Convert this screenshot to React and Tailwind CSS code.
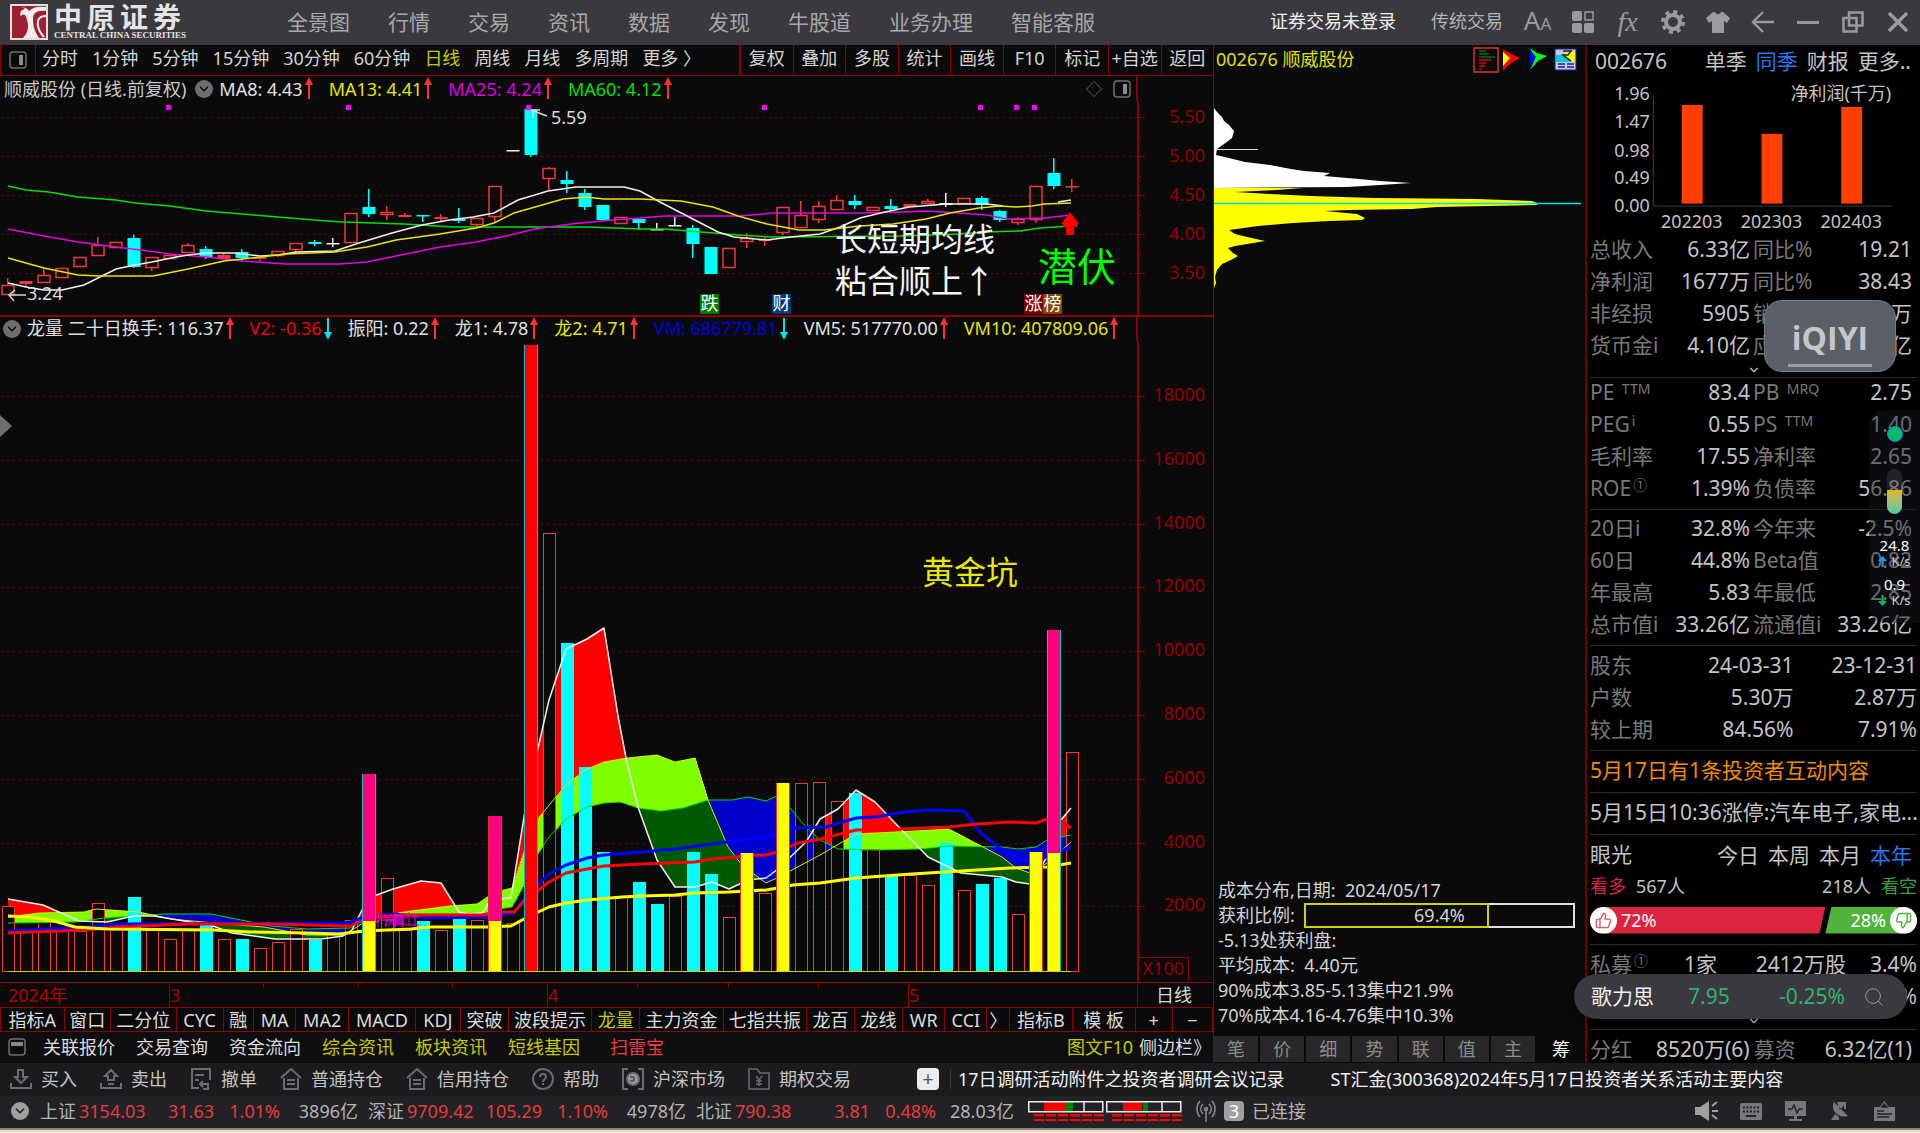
import { ChevronDown, Search, ThumbsDown, ThumbsUp } from 'lucide-react';

const MENU = ['全景图', '行情', '交易', '资讯', '数据', '发现', '牛股道', '业务办理', '智能客服'];
const PERIODS = ['分时', '1分钟', '5分钟', '15分钟', '30分钟', '60分钟', '日线', '周线', '月线', '多周期', '更多 〉'];
const TOOLS = ['复权', '叠加', '多股', '统计', '画线', 'F10', '标记', '+自选', '返回'];
const SIDE_TABS = ['笔', '价', '细', '势', '联', '值', '主'];

// label and relative width of every tab in the indicator bar
const INDICATORS = [
  ['指标A', 64], ['窗口', 46], ['二分位', 66], ['CYC', 47], ['融', 30], ['MA', 42], ['MA2', 53], ['MACD', 67],
  ['KDJ', 45], ['突破', 48], ['波段提示', 84], ['龙量', 48], ['主力资金', 84], ['七指共振', 84], ['龙百', 48],
  ['龙线', 48], ['WR', 42], ['CCI', 42], ['〉', 22], ['指标B', 63], ['模 板', 63], ['+', 37], ['−', 40],
];

const MA_LABELS = [
  { text: 'MA8: 4.43', cls: 'text-[#e0e0e0]', dir: 'up' },
  { text: 'MA13: 4.41', cls: 'text-[#e6e600]', dir: 'up' },
  { text: 'MA25: 4.24', cls: 'text-[#e000e0]', dir: 'up' },
  { text: 'MA60: 4.12', cls: 'text-[#00e000]', dir: 'up' },
];

const VOL_LABELS = [
  { text: '龙量 二十日换手: 116.37', cls: 'text-[#e0e0e0]', dir: 'up' },
  { text: 'V2: -0.36', cls: 'text-[#f00000]', dir: 'down' },
  { text: '振阳: 0.22', cls: 'text-[#e0e0e0]', dir: 'up' },
  { text: '龙1: 4.78', cls: 'text-[#e0e0e0]', dir: 'up' },
  { text: '龙2: 4.71', cls: 'text-[#e6e600]', dir: 'up' },
  { text: 'VM: 686779.81', cls: 'text-[#0000e0]', dir: 'down' },
  { text: 'VM5: 517770.00', cls: 'text-[#e0e0e0]', dir: 'up' },
  { text: 'VM10: 407809.06', cls: 'text-[#e6e600]', dir: 'up' },
];

// kind, body top, body bottom, high, low
// r = hollow red, c = cyan, f = flat red, w = white cross
const CANDLES = [
  ['r', 285, 295, 278, 295], ['f', 281, 284, 281, 287], ['r', 275, 283, 268, 283], ['r', 268, 278, 268, 278],
  ['r', 257, 267, 257, 267], ['r', 245, 256, 237, 256], ['r', 242, 248, 242, 248], ['c', 238, 267, 235, 268],
  ['r', 257, 268, 257, 271], ['r', 255, 259, 255, 259], ['r', 245, 253, 243, 253], ['c', 249, 257, 246, 259],
  ['f', 255, 259, 253, 259], ['c', 252, 258, 249, 261], ['f', 257, 259, 257, 261], ['r', 251, 256, 251, 257],
  ['r', 243, 250, 243, 252], ['c', 242, 244, 240, 246], ['w', 243, 244, 238, 247], ['r', 213, 243, 213, 243],
  ['c', 207, 214, 189, 217], ['r', 212, 215, 206, 220], ['f', 215, 217, 213, 217], ['c', 215, 216, 215, 222],
  ['f', 217, 219, 214, 222], ['c', 219, 221, 208, 223], ['r', 218, 225, 218, 227], ['r', 186, 217, 186, 222],
  ['w', 150, 151, 150, 151], ['c', 109, 155, 109, 157], ['r', 168, 179, 167, 190], ['c', 180, 184, 171, 193],
  ['c', 193, 207, 189, 210], ['c', 205, 220, 205, 220], ['r', 217, 224, 217, 224], ['c', 219, 223, 219, 230],
  ['w', 229, 230, 223, 230], ['w', 225, 226, 217, 226], ['c', 228, 244, 225, 258], ['c', 247, 274, 247, 274],
  ['r', 248, 268, 248, 268], ['r', 238, 242, 233, 248], ['f', 239, 241, 237, 246], ['r', 207, 233, 207, 235],
  ['r', 215, 228, 201, 228], ['r', 206, 220, 201, 223], ['r', 200, 210, 195, 210], ['c', 201, 205, 195, 209],
  ['r', 207, 211, 207, 211], ['c', 206, 209, 199, 211], ['f', 204, 207, 204, 207], ['r', 201, 204, 199, 204],
  ['w', 203, 205, 193, 207], ['r', 198, 204, 198, 204], ['c', 198, 205, 196, 210], ['c', 211, 220, 210, 222],
  ['r', 219, 223, 217, 225], ['r', 186, 220, 186, 223], ['c', 173, 186, 158, 189], ['f', 186, 187, 179, 192],
];

// kind and top of each volume bar
// p = pink over yellow, y = yellow, x = full red
const VOLUMES = [
  ['r', 906], ['r', 931], ['r', 922], ['r', 931], ['r', 931], ['r', 903], ['r', 925], ['c', 897], ['r', 928], ['r', 939],
  ['r', 929], ['c', 924], ['r', 939], ['c', 939], ['r', 948], ['r', 942], ['r', 929], ['c', 940], ['r', 933], ['r', 920],
  ['p', 774, 921], ['r', 878], ['r', 930], ['c', 921], ['r', 930], ['c', 919], ['r', 920], ['p', 816, 921], ['r', 923],
  ['x', 345], ['r', 533], ['c', 643], ['c', 767], ['c', 852], ['r', 896], ['c', 882], ['c', 904], ['r', 896], ['c', 852],
  ['c', 874], ['r', 917], ['y', 853], ['r', 893], ['y', 783], ['r', 783], ['r', 782], ['r', 801], ['c', 793], ['r', 849],
  ['c', 875], ['r', 875], ['r', 885], ['c', 843], ['r', 890], ['c', 884], ['c', 878], ['r', 914], ['y', 852],
  ['p', 630, 853], ['r', 752],
];

const MA8 = '8,283 26,287 44,290 62,290 84,285 100,277 116,269 135,265 152,262 176,257 188,255 206,253 233,253 260,256 278,255 296,252 335,251 359,243 392,233 422,225 449,220 473,217 494,213 518,200 548,191 576,187 624,187 640,191 660,202 689,217 718,232 734,237 767,240 791,237 820,234 840,227 860,218 885,212 909,207 946,204 987,204 1003,206';
const MA13 = '8,258 26,263 44,268 78,275 100,276 153,276 188,269 224,261 242,259 260,257 286,254 335,252 367,247 396,240 440,234 476,228 494,223 514,213 563,199 586,197 604,199 640,199 681,201 713,207 738,216 767,224 799,230 824,230 860,226 893,224 926,219 950,213 979,208 999,206 1016,207 1032,206 1044,204 1071,203';
const MA25 = '8,229 44,236 78,242 116,247 141,250 170,254 206,257 242,261 286,264 339,264 367,262 396,256 440,247 476,242 506,236 535,229 571,224 612,220 640,218 664,216 738,216 775,213 860,213 901,212 926,211 958,213 987,215 1007,219 1044,218 1071,215';
const MA60 = '8,186 26,190 49,192 78,197 116,200 135,203 170,206 206,211 242,214 278,217 314,220 343,222 404,224 453,227 588,227 640,229 664,229 701,232 738,235 771,237 901,236 958,234 987,232 1020,231 1040,228 1071,226';

const V_WHITE = '8,899 43,905 61,913 79,921 107,922 134,916 154,916 184,921 213,926 232,933 275,939 321,939 343,936 352,930 362,910 374,896 393,889 421,881 441,883 459,912 468,914 482,913 489,903 500,899 511,898 524,817 536,757 549,700 566,649 587,639 604,628 618,716 627,763 638,807 657,860 675,887 695,887 712,882 729,889 748,880 766,878 778,869 806,842 820,819 838,809 856,790 875,802 895,823 928,857 961,873 1002,877 1016,882 1030,884 1047,857 1061,820 1071,808';
const V_YELLOW = '8,917 39,913 84,912 96,909 139,912 171,919 214,923 264,927 307,935 343,935 357,927 371,917 411,911 450,906 477,904 489,896 500,891 512,888 524,852 536,821 566,785 585,770 604,762 627,758 657,755 675,762 695,758 708,800 728,847 742,865 766,883 779,877 820,855 856,834 895,832 949,829 1002,857 1016,868 1030,873 1047,863 1071,842';
const V_GREEN = '8,923 75,922 104,918 164,914 211,914 246,921 271,926 307,929 350,928 364,920 393,914 482,914 500,909 512,907 524,885 536,857 549,837 566,819 587,807 604,803 620,802 638,808 661,811 683,808 708,800 732,800 748,797 766,801 779,795 806,827 820,840 838,849 875,850 920,849 949,846 1002,847 1018,849 1036,847 1047,840 1071,835';
const V_BLUE = '8,931 46,929 86,927 118,924 348,923 364,917 396,914 429,918 486,917 514,913 524,898 536,886 549,874 566,865 587,858 604,855 642,852 675,849 712,844 748,839 765,837 778,834 791,828 826,827 856,818 875,817 904,812 928,810 964,811 981,833 998,847 1016,857 1030,861 1047,857 1071,847';
const V_RED = '8,933 29,932 61,931 96,929 118,927 186,924 268,924 350,926 368,918 407,915 482,915 500,912 514,912 524,901 536,892 549,882 566,873 587,869 604,866 642,864 695,862 712,859 748,856 765,855 778,852 798,843 820,839 856,830 900,829 949,827 977,824 1010,822 1036,823 1047,819 1055,817 1071,828';
const V_GOLD = '8,916 29,917 54,921 75,927 107,929 214,930 250,932 307,933 339,934 364,931 411,929 429,927 489,927 511,926 524,919 536,913 549,907 566,903 587,900 622,897 642,896 675,895 695,893 729,892 766,890 778,888 793,885 820,883 856,878 912,874 961,871 1010,868 1047,867 1071,863';

const CHIP_WHITE = '0,108 3,112 8,117 10,121 15,125 20,131 18,138 10,144 3,149 2,155 15,158 31,162 56,165 77,169 90,171 116,173 110,176 145,179 166,181 197,183 166,185 133,187 0,188';
const CHIP_YELLOW = '0,188 88,188 63,190 21,192 56,194 97,196 161,198 262,199 318,201 323,203 323,205 223,207 198,209 134,210 111,211 143,214 151,218 148,220 115,221 79,223 44,226 15,230 21,234 33,237 51,241 21,246 14,248 19,253 24,256 17,260 8,264 3,270 1,277 2,283 0,288';

const barX = i => Math.round(8 + i * 18.03);
const parse = s => s.split(' ').map(p => p.split(',').map(Number));

function yAt(points, x) {
  const k = points.findIndex(p => p[0] >= x);
  if (k <= 0) return points[0][1];
  const [x0, y0] = points[k - 1];
  const [x1, y1] = points[k];
  return y0 + ((y1 - y0) * (x - x0)) / (x1 - x0);
}

// fill between two curves wherever the first one is on top
function band(topOf, bottomOf) {
  let d = '';
  for (let x = 8; x < 1071; x++) {
    const top = topOf(x);
    const bottom = bottomOf(x);
    if (bottom > top) d += `M${x} ${top.toFixed(1)}h1V${bottom.toFixed(1)}h-1z`;
  }
  return d;
}

const white = parse(V_WHITE);
const yellow = parse(V_YELLOW);
const green = parse(V_GREEN);
const BANDS = [
  { fill: '#005a00', d: band(x => Math.max(yAt(yellow, x), yAt(green, x)), x => yAt(white, x)) },
  { fill: '#0000cc', d: band(x => yAt(green, x), x => yAt(yellow, x)) },
  { fill: '#80ff00', d: band(x => yAt(yellow, x), x => yAt(green, x)) },
  { fill: '#ff0000', d: band(x => yAt(white, x), x => Math.min(yAt(yellow, x), yAt(green, x))) },
];

function Trend({ dir }) {
  return dir === 'up' ? (
    <svg className="h-6 w-3 shrink-0" viewBox="0 0 12 24"><path d="M6 0l4 8H7v14H5V8H2z" fill="#ff3030" /></svg>
  ) : (
    <svg className="h-6 w-3 shrink-0" viewBox="0 0 12 24"><path d="M6 23l4-8H7V1H5v14H2z" fill="#00e5e5" /></svg>
  );
}

function Readout({ items, className }) {
  return (
    <div className={className}>
      {items.map(it => (
        <span key={it.text} className="flex items-center whitespace-nowrap">
          <span className={it.cls}>{it.text}</span>
          <Trend dir={it.dir} />
        </span>
      ))}
    </div>
  );
}

function RoundToggle() {
  return (
    <button className="flex h-[18px] w-[18px] shrink-0 items-center justify-center rounded-full bg-[#6e6e6e] text-[#111]" aria-label="展开">
      <ChevronDown size={14} strokeWidth={3} />
    </button>
  );
}

function PanelIcon() {
  return (
    <svg className="h-[18px] w-[18px] shrink-0" viewBox="0 0 18 18">
      <rect x="1" y="1" width="16" height="16" rx="3" fill="none" stroke="#707070" strokeWidth="1.500" />
      <rect x="10" y="4" width="4" height="10" fill="#8c8c8c" />
    </svg>
  );
}

function Logo() {
  return (
    <a href="#home" className="flex w-[249px] shrink-0 items-center gap-1.5">
      <svg className="h-9 w-[38px]" viewBox="0 0 38 36">
        <rect x="1" y="1" width="36" height="34" fill="#9c1f33" stroke="#e6dcdc" strokeWidth="2" />
        <path d="M8 3c7 0 9 1 11 4 4-4 9-5 17-4v4c-9-1-13 2-13 8 0 8 2 13 6 19H13c5-5 6-11 4-18-1-5-3-7-6-4-2-3 0-6 4-7-2-2-4-2-7-2z" fill="#f2eeee" />
        <path d="M36 12c-7 0-9 4-8 10 1 5 3 8 6 11" fill="none" stroke="#f2eeee" strokeWidth="2" />
      </svg>
      <span className="flex flex-col text-[#e4e4e4]">
        <span className="flex gap-[5px] text-[28px] leading-[28px] font-bold">
          <span>中</span><span>原</span><span>证</span><span>券</span>
        </span>
        <span className="font-['Liberation_Serif',serif] text-[9px] leading-[9px] font-bold whitespace-nowrap">CENTRAL CHINA SECURITIES</span>
      </span>
    </a>
  );
}

const WINDOW_BUTTONS = [
  { name: '字体', body: <span className="flex items-baseline text-[26px] leading-6">A<span className="text-[17px]">A</span></span> },
  {
    name: '布局',
    body: (
      <svg className="h-[22px] w-[22px]" viewBox="0 0 22 22" fill="currentColor">
        <rect width="10" height="10" rx="2" /><rect x="13" y="1" width="8" height="8" fill="none" stroke="currentColor" strokeWidth="1.500" />
        <rect y="12" width="10" height="10" rx="2" /><rect x="12" y="12" width="10" height="10" rx="2" />
      </svg>
    ),
  },
  { name: '公式', body: <span className="font-['Liberation_Serif',serif] text-[28px] leading-6 italic">fx</span> },
  {
    name: '设置',
    body: (
      <svg className="h-6 w-6" viewBox="0 0 24 24" fill="none" stroke="currentColor">
        <circle cx="12" cy="12" r="7" strokeWidth="4" />
        <circle cx="12" cy="12" r="10" strokeWidth="4" strokeDasharray="3.9 3.95" />
      </svg>
    ),
  },
  {
    name: '换肤',
    body: (
      <svg className="h-6 w-6" viewBox="0 0 24 24" fill="currentColor"><path d="M7 2l-7 6 3 5 3-2v12h12V11l3 2 3-5-7-6h-2c-1 3-5 3-6 0z" /></svg>
    ),
  },
  {
    name: '后退',
    body: (
      <svg className="h-6 w-6" viewBox="0 0 24 24" fill="none" stroke="currentColor" strokeWidth="2.4"><path d="M23 12H2M12 2L2 12l10 10" /></svg>
    ),
  },
  { name: '最小化', body: <svg className="h-6 w-6" viewBox="0 0 24 24"><path d="M1 12.500h22" stroke="currentColor" strokeWidth="3" /></svg> },
  {
    name: '还原',
    body: (
      <svg className="h-[22px] w-[22px]" viewBox="0 0 22 22" fill="none" stroke="currentColor" strokeWidth="2.500">
        <rect x="7" y="1.500" width="13.500" height="13" /><rect x="1.500" y="7" width="13" height="13.500" />
      </svg>
    ),
  },
  { name: '关闭', body: <svg className="h-5 w-5" viewBox="0 0 20 20"><path d="M1 1l18 18M19 1L1 19" stroke="currentColor" strokeWidth="3.500" /></svg> },
];

function TitleBar() {
  return (
    <header className="flex h-[45px] shrink-0 items-center bg-[#3a393e] pb-0.5 pl-[10px]">
      <Logo />
      <nav className="ml-7 flex gap-[38px] text-[21px] leading-6 whitespace-nowrap text-[#a8a8aa]">
        {MENU.map(m => <a key={m} href="#menu">{m}</a>)}
      </nav>
      <div className="ml-auto flex items-center text-[18px]">
        <a href="#login" className="mr-[35px] whitespace-nowrap text-[#f0f0f0]">证券交易未登录</a>
        <a href="#trade" className="mr-3 whitespace-nowrap text-[#b4b4b4]">传统交易</a>
        {WINDOW_BUTTONS.map(b => (
          <button key={b.name} aria-label={b.name} className="flex w-[45px] items-center justify-center text-[#9b9b9d]">{b.body}</button>
        ))}
      </div>
    </header>
  );
}

function Toolbar() {
  return (
    <div className="flex h-[31px] shrink-0 border-b border-[#8b0000] text-[18px] leading-[26px]">
      <div className="flex w-9 items-center justify-center border-x border-[#8b0000]"><PanelIcon /></div>
      <div className="flex flex-1 items-start gap-[14px] overflow-hidden pl-[6px] whitespace-nowrap">
        {PERIODS.map(p => (
          <button key={p} className={p === '日线' ? 'text-[#c8c800]' : 'text-[#d4d4d4]'}>{p}</button>
        ))}
      </div>
      <div className="flex w-[474px] border-l border-[#8b0000]">
        {TOOLS.map(t => (
          <button key={t} className="flex flex-1 basis-0 items-start justify-center border-l border-[#8b0000] whitespace-nowrap text-[#d4d4d4]">{t}</button>
        ))}
      </div>
    </div>
  );
}

function Candle({ i, data }) {
  const [kind, top, bottom, high, low] = data;
  const x = barX(i);
  const color = { r: '#f03838', f: '#f03838', c: '#00ffff', w: '#f0f0f0' }[kind];
  return (
    <g>
      {high < top && <rect x={x - 1} y={high} width="1.500" height={top - high} fill={color} />}
      {low > bottom && <rect x={x - 1} y={bottom} width="1.500" height={low - bottom} fill={color} />}
      {kind === 'r' ? (
        <rect x={x - 6} y={top + 0.5} width="12" height={Math.max(bottom - top - 1, 2)} fill="none" stroke={color} strokeWidth="1.500" />
      ) : (
        <rect x={x - 6.5} y={top} width="13" height={Math.max(bottom - top, 1.5)} fill={color} />
      )}
    </g>
  );
}

const BADGES = [
  { t: '跌', x: 700, c: '#007d00' },
  { t: '财', x: 772, c: '#003a78' },
  { t: '涨', x: 1024, c: '#800000' },
  { t: '榜', x: 1043, c: '#8a4500' },
];

function PriceChart() {
  return (
    <svg className="block h-auto w-full" viewBox="0 102 1213 213">
      <g stroke="#8b0000" shapeRendering="crispEdges">
        {[117, 156, 195, 234, 273].map(y => (
          <g key={y}>
            <path d={`M1 ${y}.5H1137`} strokeDasharray="2 4" opacity="0.8" />
            <path d={`M1137 ${y}.5h8M1137 ${y + 20}.5h4`} />
          </g>
        ))}
        <path d="M1137.500 102V315" strokeWidth="2" />
      </g>
      <g fill="#960000" fontSize="18" textAnchor="end">
        <text x="1205" y="123">5.50</text><text x="1205" y="162">5.00</text><text x="1205" y="201">4.50</text>
        <text x="1205" y="240">4.00</text><text x="1205" y="279">3.50</text>
      </g>
      {CANDLES.map((c, i) => <Candle key={i} i={i} data={c} />)}
      <g fill="none" strokeWidth="1.500">
        <polyline points={MA60} stroke="#00e000" />
        <polyline points={MA25} stroke="#e600e6" />
        <polyline points={MA8} stroke="#f0f0f0" />
        <polyline points={MA13} stroke="#e6e600" />
        <path d="M1058 202l13-2" stroke="#f0f0f0" />
        <path d="M547 116l-16-6m2 8v-8h7" stroke="#d8d8d8" />
        <path d="M26 295H9m6-5l-6 5 5 6" stroke="#d8d8d8" />
      </g>
      {[168, 348, 528, 764, 980, 1016, 1034].map(x => <rect key={x} x={x - 2} y="105" width="5" height="5" fill="#ff00ff" />)}
      <g fill="#dcdcdc" fontSize="18">
        <text x="551" y="124">5.59</text><text x="27" y="300">3.24</text>
      </g>
      <g fill="#f4f4f4" fontSize="32">
        <text x="835" y="251">长短期均线</text><text x="835" y="293">粘合顺上↑</text>
      </g>
      <text x="1038" y="281" fontSize="39" fill="#00ff00">潜伏</text>
      <path d="M1070 212l9 12h-2v3h-3v8h-8v-8h-3v-3h-2z" fill="#ff0000" />
      {BADGES.map(b => (
        <g key={b.t}>
          <rect x={b.x} y="294" width="19" height="20" fill={b.c} />
          <text x={b.x + 9.5} y="310" fontSize="18" textAnchor="middle" fill="#fff">{b.t}</text>
        </g>
      ))}
    </svg>
  );
}

function VolumeBar({ i, data, front }) {
  const [kind, top, split] = data;
  const x = barX(i);
  const h = 971 - top;
  if (front !== (kind === 'p' || kind === 'y' || kind === 'x')) return null;
  if (kind === 'r') return <rect x={x - 5.5} y={top + 0.5} width="12" height={h} fill="#0a0a0a" stroke="#f03838" />;
  if (kind === 'c') return <rect x={x - 6} y={top} width="13" height={h} fill="#00ffff" />;
  const edge = kind === 'x' || i === 20 || i === 58 ? '#00c8c8' : '#e03030';
  const fill = { p: '#ff0080', y: '#ffff00', x: '#ff0000' }[kind];
  return (
    <g>
      <rect x={x - 7} y={top} width="14" height={h} fill={edge} />
      <rect x={x - 6} y={top} width="12" height={h} fill={fill} />
      {split && <rect x={x - 6} y={split} width="12" height={971 - split} fill="#ffff00" />}
    </g>
  );
}

function VolumeChart() {
  const levels = [18000, 16000, 14000, 12000, 10000, 8000, 6000, 4000, 2000];
  return (
    <svg className="block h-auto w-full" viewBox="0 342 1213 641">
      <g stroke="#8b0000" shapeRendering="crispEdges">
        {levels.map((v, k) => {
          const y = Math.round(396 + k * 63.8);
          return (
            <g key={v}>
              <path d={`M1 ${y}.5H1137`} strokeDasharray="2 4" opacity="0.8" />
              <path d={`M1137 ${y}.5h8M1137 ${y + 32}.5h4`} />
            </g>
          );
        })}
        <path d="M1137.500 342V982" strokeWidth="2" />
        <path d="M0 982.500H1213" strokeWidth="2" />
        <path d="M1137 957.500H1188V981" fill="none" />
      </g>
      <g fill="#960000" fontSize="18" textAnchor="end">
        {levels.map((v, k) => <text key={v} x="1205" y={Math.round(401 + k * 63.8)}>{v}</text>)}
        <text x="1184" y="975">X100</text>
      </g>
      <g shapeRendering="crispEdges">
        {BANDS.map(b => <path key={b.fill} d={b.d} fill={b.fill} />)}
        {VOLUMES.map((v, i) => <VolumeBar key={i} i={i} data={v} front={false} />)}
      </g>
      <g fill="none" strokeLinejoin="round">
        <polyline points={V_GREEN} stroke="#00dc00" />
        <polyline points={V_YELLOW} stroke="#e6e600" />
        <polyline points={V_WHITE} stroke="#f0f0f0" strokeWidth="1.500" />
        <polyline points={V_BLUE} stroke="#0000ff" strokeWidth="3" />
        <polyline points={V_RED} stroke="#ff0000" strokeWidth="3" />
        <polyline points={V_GOLD} stroke="#ffff00" strokeWidth="3" />
      </g>
      <path
        d="M374 915h12m-8-2v14m4-7h14m-10-6v13m5-13l-6 12m10-12v14m-6-8h14m-8-7v14m5-14v12m-10-3h14m-8-8v12m6-13v14m-10-9h16m-10-4v12m5-13v14m-12-3h14M374 925l8-8m-5 3h16M372 922h8m8 4l9-12m14 3h8m-14 8h14m-10-13v14m6-13v13"
        fill="none" stroke="#e000e0"
      />
      <g shapeRendering="crispEdges">
        {VOLUMES.map((v, i) => <VolumeBar key={i} i={i} data={v} front />)}
        <path d="M8 971.500H1071" stroke="#d2d200" strokeWidth="1.500" />
      </g>
      <text x="922" y="584" fontSize="32" fill="#e6e600">黄金坑</text>
    </svg>
  );
}

function TimeAxis() {
  return (
    <svg className="block h-auto w-full" viewBox="0 983 1213 24">
      <path
        d="M169.500 983v24M547.500 983v24M908.500 983v24M263.500 983v4M358.500 983v4M452.500 983v4M637.500 983v4M728.500 983v4M818.500 983v4M1137.500 983v24"
        stroke="#8b0000" shapeRendering="crispEdges"
      />
      <g fontSize="18" fill="#b40000">
        <text x="8" y="1002">2024年</text><text x="170" y="1002">3</text><text x="548" y="1002">4</text><text x="909" y="1002">5</text>
      </g>
      <text x="1174" y="1002" fontSize="18" textAnchor="middle" fill="#d8d8d8">日线</text>
    </svg>
  );
}

const LINKS = [
  ['关联报价', 'text-[#dcdcdc]'], ['交易查询', 'text-[#dcdcdc]'], ['资金流向', 'text-[#dcdcdc]'],
  ['综合资讯', 'text-[#c8c800]'], ['板块资讯', 'text-[#c8c800]'], ['短线基因', 'text-[#c8c800]'],
];

function ChartColumn() {
  return (
    <section className="flex min-w-0 flex-1 flex-col">
      <Toolbar />
      <div className="flex h-[26px] items-center text-[18px]">
        <span className="ml-1 whitespace-nowrap text-[#c8c8c8]">顺威股份 (日线.前复权)</span>
        <div className="ml-[9px] flex"><RoundToggle /></div>
        <Readout items={MA_LABELS} className="ml-[6px] flex gap-[14px]" />
        <svg className="mr-[10px] ml-auto h-[18px] w-[18px]" viewBox="0 0 18 18"><path d="M9 1.500l7.500 7.500L9 16.500 1.500 9z" fill="none" stroke="#606060" /></svg>
        <PanelIcon />
        <span className="ml-[5px] h-full w-[77px] border-l-2 border-[#8b0000]" />
      </div>
      <PriceChart />
      <div className="flex h-[27px] items-center border-t-2 border-[#8b0000] pb-0.5 text-[18px]">
        <div className="ml-[3px] flex"><RoundToggle /></div>
        <Readout items={VOL_LABELS} className="ml-[6px] flex gap-[14px]" />
        <span className="ml-auto h-[27px] w-[77px] shrink-0 border-l-2 border-[#8b0000]" />
      </div>
      <VolumeChart />
      <TimeAxis />
      <div className="flex h-[25px] border-y border-l border-[#8b0000] text-[18px] leading-[22px]">
        {INDICATORS.map(([t, w]) => (
          <button
            key={t}
            style={{ flexGrow: w }}
            className={`basis-0 border-r border-[#8b0000] whitespace-nowrap ${t === '龙量' ? 'text-[#c8c800]' : 'text-[#dcdcdc]'}`}
          >
            {t}
          </button>
        ))}
      </div>
      <div className="flex h-[30px] items-center bg-[#0e0e10] pl-2 text-[18px] whitespace-nowrap">
        <svg className="mr-[17px] h-[18px] w-[18px]" viewBox="0 0 18 18">
          <rect x="1" y="1" width="16" height="16" rx="3" fill="none" stroke="#707070" strokeWidth="1.500" /><rect x="3" y="4" width="12" height="4" fill="#8a8a8a" />
        </svg>
        <div className="flex gap-[21px]">
          {LINKS.map(([t, cls]) => <a key={t} href="#news" className={cls}>{t}</a>)}
        </div>
        <a href="#risk" className="ml-[30px] text-[#f03c3c]">扫雷宝</a>
        <a href="#f10" className="mr-[6px] ml-auto text-[#c8c800]">图文F10</a>
        <a href="#side" className="mr-[2px] text-[#dcdcdc]">侧边栏》</a>
      </div>
    </section>
  );
}

function ChipColumn() {
  return (
    <section className="flex w-[372px] shrink-0 flex-col border-l border-[#8b0000] text-[18px] text-[#d4d4d4]">
      <div className="flex h-[31px] items-center pb-0.5 pl-[2px]">
        <h1 className="mr-auto whitespace-nowrap text-[#e0e000]">002676 顺威股份</h1>
        <svg className="mr-2 h-[26px] w-[104px]" viewBox="0 0 104 26">
          <rect x="1" y="1" width="24" height="24" fill="none" stroke="#e03030" strokeWidth="1.500" />
          <path d="M6 4h7M6 7h10M6 10h16" stroke="#007000" strokeWidth="1.500" />
          <path d="M6 13h12M6 16h7M6 19h6M6 22h3" stroke="#e00000" strokeWidth="1.500" />
          <path d="M30 2l8 5 9 4-9 5-8 8z" fill="#ff0000" /><path d="M30 5l7 6-7 8z" fill="#ffff00" />
          <path d="M57 1l7 5 10 3-9 5-8 9 5-11z" fill="#00ff00" /><path d="M57 3l6 7-6 9z" fill="#0000ff" />
          <rect x="82" y="2" width="21" height="21" fill="#c8c8d8" stroke="#1a1a9a" />
          <rect x="93" y="5" width="9" height="9" fill="#ffff00" /><path d="M83 8h6l8 5v2H83z" fill="#00c8d8" />
          <path d="M90 4h8l-3 4h-5l8 6" fill="none" stroke="#222" strokeWidth="1.500" />
          <path d="M85 17h7M85 20h7M94 17h7M94 20h7" stroke="#1a1a9a" strokeWidth="1.500" />
        </svg>
      </div>
      <svg className="block h-auto w-full" viewBox="0 76 371 214">
        <polygon points={CHIP_WHITE} fill="#ffffff" />
        <polygon points={CHIP_YELLOW} fill="#ffff00" />
        <path d="M0 149.500H44" stroke="#e0e0e0" />
        <path d="M0 203.500H367" stroke="#00e0e0" strokeWidth="1.500" />
      </svg>
      <div className="mt-auto mb-2 px-1 leading-[25px] whitespace-nowrap">
        <p>成本分布,日期:&nbsp; 2024/05/17</p>
        <div className="flex items-center">
          <span>获利比例:</span>
          <div className="relative ml-[9px] mr-1.5 h-[25px] flex-1 border-2 border-[#e0e0e0] text-center leading-[21px]">
            <span className="absolute -top-0.5 -left-0.5 h-[25px] border-2 border-[#d2d200]" style={{ width: '69.4%' }} />
            69.4%
          </div>
        </div>
        <p>-5.13处获利盘:</p>
        <p>平均成本:&nbsp; 4.40元</p>
        <p>90%成本3.85-5.13集中21.9%</p>
        <p>70%成本4.16-4.76集中10.3%</p>
      </div>
      <div className="mb-px flex h-[26px] gap-0.5 text-[18px] leading-6">
        {SIDE_TABS.map(t => <button key={t} className="flex-1 bg-[#28282a] text-[#8c8c8c]">{t}</button>)}
        <button className="w-12 text-white">筹</button>
      </div>
    </section>
  );
}

function ProfitChart() {
  return (
    <svg className="block h-auto w-full" viewBox="1586 80 334 155" role="img" aria-label="净利润">
      <g fill="#c4c4c4" fontSize="18">
        <g textAnchor="end">
          <text x="1649" y="100">1.96</text><text x="1649" y="128">1.47</text><text x="1649" y="157">0.98</text>
          <text x="1649" y="184">0.49</text><text x="1649" y="212">0.00</text><text x="1891" y="100">净利润(千万)</text>
        </g>
        <g textAnchor="middle">
          <text x="1691" y="228">202203</text><text x="1771" y="228">202303</text><text x="1851" y="228">202403</text>
        </g>
      </g>
      <path d="M1652.500 95v111.500H1892" fill="none" stroke="#3c3c3c" />
      <g fill="#ff4000">
        <rect x="1681" y="105" width="21" height="99" /><rect x="1761" y="134" width="21" height="70" /><rect x="1841" y="107" width="21" height="97" />
      </g>
    </svg>
  );
}

function Sup({ children }) {
  return <span className="relative -top-1.5 ml-0.5 text-[14px] leading-none">{children}</span>;
}

function Rows({ rows }) {
  return (
    <table className="w-full table-fixed leading-7 whitespace-nowrap">
      <colgroup><col className="w-[72px]" /><col className="w-[88px]" /><col className="w-[78px]" /><col /></colgroup>
      <tbody>
        {rows.map((r, i) => (
          <tr key={i} className="h-8">
            <th className="p-0 pb-1 text-left font-normal text-[#787878]">{r[0]}</th>
            <td className="p-0 pb-1 text-right">{r[1]}</td>
            <th className="p-0 pb-1 pl-[3px] text-left font-normal text-[#787878]">{r[2]}</th>
            <td className="p-0 pb-1 text-right">{r[3]}</td>
          </tr>
        ))}
      </tbody>
    </table>
  );
}

const INCOME = [
  ['总收入', '6.33亿', '同比%', '19.21'],
  ['净利润', '1677万', '同比%', '38.43'],
  ['非经损', '5905', '销售额', '620万'],
  ['货币金i', '4.10亿', '应收款', '7.2亿'],
];

const RATIOS = [
  [<>PE <Sup>TTM</Sup></>, '83.4', <>PB <Sup>MRQ</Sup></>, '2.75'],
  [<>PEG<Sup>i</Sup></>, '0.55', <>PS <Sup>TTM</Sup></>, '1.40'],
  ['毛利率', '17.55', '净利率', '2.65'],
  [<>ROE<Sup>①</Sup></>, '1.39%', '负债率', '56.86'],
];

const RETURNS = [
  ['20日i', '32.8%', '今年来', '-2.5%'],
  ['60日', '44.8%', 'Beta值', '0.82'],
  ['年最高', '5.83', '年最低', '2.85'],
  ['总市值i', '33.26亿', '流通值i', '33.26亿'],
];

const HOLDERS = [['股东', '24-03-31', '23-12-31'], ['户数', '5.30万', '2.87万'], ['较上期', '84.56%', '7.91%']];

function InfoColumn() {
  return (
    <aside className="relative flex w-[335px] shrink-0 flex-col border-l-2 border-[#6e0000] bg-black text-[21px] leading-8 text-[#c4c4c4]">
      <div className="flex h-[35px] items-center gap-[9px] pr-[9px] pb-1 pl-2 whitespace-nowrap">
        <span className="mr-auto">002676</span>
        <button>单季</button>
        <button className="text-[#2878f0]">同季</button>
        <button>财报</button>
        <button>更多..</button>
      </div>
      <ProfitChart />
      <div className="mx-[3px] flex flex-col">
        <div className="pr-[5px]"><Rows rows={INCOME} /></div>
        <button className="flex h-[14px] items-center justify-center" aria-label="更多数据"><ChevronDown size={14} strokeWidth={2} /></button>
        <div className="border-t border-[#2a2a2a] pr-[5px] pb-[3px]"><Rows rows={RATIOS} /></div>
        <div className="border-t border-[#2a2a2a] pt-1 pr-[5px] pb-[3px]"><Rows rows={RETURNS} /></div>
        <div className="border-t border-[#2a2a2a] pt-[5px] pb-[3px]">
          <table className="w-full table-fixed leading-7">
            <tbody>
              {HOLDERS.map(r => (
                <tr key={r[0]} className="h-8">
                  <th className="w-[80px] p-0 pb-1 text-left font-normal text-[#787878]">{r[0]}</th>
                  <td className="p-0 pb-1 text-right">{r[1]}</td>
                  <td className="p-0 pb-1 text-right">{r[2]}</td>
                </tr>
              ))}
            </tbody>
          </table>
        </div>
        <a href="#qa" className="block h-[42px] border-t border-[#2a2a2a] leading-[38px] whitespace-nowrap text-[#f08c00]">5月17日有1条投资者互动内容</a>
        <a href="#limit" className="block h-[42px] border-t border-[#2a2a2a] leading-[38px] whitespace-nowrap">5月15日10:36涨停:汽车电子,家电...</a>
        <div className="border-t border-[#2a2a2a] pt-1 pb-[10px]">
          <div className="flex h-8 gap-[9px] pr-[5px] leading-[30px]">
            <span className="mr-auto">眼光</span>
            <button>今日</button><button>本周</button><button>本月</button>
            <button className="text-[#2878f0]">本年</button>
          </div>
          <div className="flex h-9 text-[18px] leading-[30px]">
            <span className="text-[#dc2440]">看多</span><span className="ml-[10px]">567人</span>
            <span className="mr-[10px] ml-auto">218人</span><span className="text-[#3ca03c]">看空</span>
          </div>
          <div className="flex h-[27px] text-[18px] leading-[27px] text-white">
            <div className="flex items-center gap-1 rounded-l-full bg-[#dc2440] [clip-path:polygon(0_0,100%_0,calc(100%-6px)_100%,0_100%)]" style={{ width: '72%' }}>
              <span className="flex h-[27px] w-[27px] items-center justify-center rounded-full bg-white text-[#dc5a64]"><ThumbsUp size={17} /></span>
              72%
            </div>
            <div className="flex flex-1 items-center justify-end gap-1 rounded-r-full bg-[#50b43c] [clip-path:polygon(6px_0,100%_0,100%_100%,0_100%)]">
              28%
              <span className="flex h-[27px] w-[27px] items-center justify-center rounded-full bg-white text-[#50b43c]"><ThumbsDown size={17} /></span>
            </div>
          </div>
        </div>
        <div className="border-t border-[#2a2a2a] pt-1 leading-[30px]">
          <div className="flex h-8 whitespace-nowrap">
            <span className="w-[94px] text-[#787878]">私募<Sup>①</Sup></span><span>1家</span>
            <span className="ml-auto">2412万股</span><span className="ml-6">3.4%</span>
          </div>
          <div className="flex h-8 whitespace-nowrap">
            <span className="w-[94px] text-[#787878]">公募</span><span>1家</span><span className="ml-auto">0.5%</span>
          </div>
          <div className="flex h-4 items-center justify-center"><ChevronDown size={14} /></div>
        </div>
        <div className="flex h-[34px] items-end border-t border-[#2a2a2a] pr-[5px] leading-7 whitespace-nowrap">
          <span className="w-[66px] text-[#787878]">分红</span><span>8520万(6)</span>
          <span className="ml-1 text-[#787878]">募资</span><span className="ml-auto">6.32亿(1)</span>
        </div>
      </div>
    </aside>
  );
}

const stroke = { fill: 'none', stroke: '#6c6c70', strokeWidth: 2 };
const TRADE = [
  ['买入', <g {...stroke}><path d="M1 15v5h20v-5M8 2h5v7h4l-6 6-6-6h3z" /></g>],
  ['卖出', <g {...stroke}><path d="M1 15v5h20v-5M8 16h6M8 12V8H5l6-6 6 6h-3v4z" /></g>],
  ['撤单', <g {...stroke}><path d="M9 20H2V1h18v11M5 7h9M5 12h4M13 13l-3 3 3 3M10 16h8v5h-5" /></g>],
  ['普通持仓', <g {...stroke}><path d="M1 10L11 1l10 9M4 10v11h14V10M7 12h8M7 16h8" /></g>],
  ['信用持仓', <g {...stroke}><path d="M1 10L11 1l10 9M4 10v11h14V10M7 12h8M7 16h8" /></g>],
  ['帮助', <g {...stroke}><circle cx="11" cy="11" r="10" /><path d="M8 9c0-4 6-4 6 0 0 2-3 2-3 5M11 15v2" /></g>],
  ['沪深市场', <g {...stroke}><path d="M6 1H1v20h5M16 1h5v20h-5" /><circle cx="11" cy="11" r="6" fill="#9a9a9e" /><path d="M8 9h4v4H8" stroke="#222" strokeWidth="1" /></g>],
  ['期权交易', <g {...stroke}><path d="M1 21V1h8l3 4h9v16zM8 8l3 4 3-4M11 12v6M8 13h6M8 16h6" strokeWidth="1.500" /></g>],
];

function TradeBar() {
  return (
    <nav className="flex h-[33px] shrink-0 items-center overflow-hidden bg-[#1b1b1d] pl-[10px] text-[18px] whitespace-nowrap text-[#c4c4c4]">
      <div className="flex gap-[23px]">
        {TRADE.map(([t, icon]) => (
          <button key={t} className="flex items-center gap-[9px]">
            <svg className="h-[22px] w-[22px]" viewBox="0 0 22 22">{icon}</svg>
            {t}
          </button>
        ))}
      </div>
      <button className="ml-[66px] flex h-[22px] w-[22px] items-center justify-center rounded-sm bg-[#ececec] text-[20px] text-[#555]" aria-label="添加">+</button>
      <span className="ml-[11px] h-5 border-l border-[#3a3a3c]" />
      <a href="#n1" className="ml-[7px] text-[#f0f0f0]">17日调研活动附件之投资者调研会议记录</a>
      <a href="#n2" className="ml-[46px] text-[#f0f0f0]">ST汇金(300368)2024年5月17日投资者关系活动主要内容</a>
    </nav>
  );
}

// label, price, change, percent, turnover
const INDEXES = [
  ['上证', '3154.03', '31.63', '1.01%', '3896亿'],
  ['深证', '9709.42', '105.29', '1.10%', '4978亿'],
  ['北证', '790.38', '3.81', '0.48%', '28.03亿'],
];

function Meter({ red, green: greenBar, tick }) {
  return (
    <svg className="h-5 w-[76px]" viewBox="0 0 76 20">
      <rect x={red[0]} y="1" width={red[1]} height="10" fill="#ff0000" />
      <rect x={greenBar[0]} y="1" width={greenBar[1]} height="10" fill="#008000" />
      <path d={`M.750.750h74v10h-74zM${tick} 1v10`} fill="none" stroke="#f0f0f0" strokeWidth="1.500" />
      {[6, 18, 30, 42, 54, 66].map(x => <path key={x} d={`M${x} 13h10v2.500h-10zm0 5h10v2h-10z`} fill="#ff0000" />)}
    </svg>
  );
}

function StatusBar() {
  return (
    <footer className="flex h-8 shrink-0 items-center bg-[#212126] pb-px pl-[11px] text-[18px] whitespace-nowrap text-[#b4b4b4]">
      <button className="mr-[11px] flex h-[18px] w-[18px] items-center justify-center rounded-full bg-[#a0a0a0] text-[#222]" aria-label="指数列表">
        <ChevronDown size={14} strokeWidth={3} />
      </button>
      {INDEXES.map(([name, price, chg, pct, amt]) => (
        <div key={name} className="mr-[10px] flex text-[#e63c3c]">
          <span className="text-[#b4b4b4]">{name}</span>
          <span className="ml-[3px] w-[70px]">{price}</span>
          <span className="w-[65px] text-right">{chg}</span>
          <span className="w-[66px] text-right">{pct}</span>
          <span className="w-[78px] text-right text-[#b4b4b4]">{amt}</span>
        </div>
      ))}
      <div className="ml-1 flex gap-[2px]">
        <Meter red={[16, 21]} green={[37, 8]} tick={56} />
        <Meter red={[17, 19]} green={[37, 5]} tick={56} />
      </div>
      <svg className="ml-[14px] h-6 w-5" viewBox="0 0 20 24" fill="none" stroke="#8c8c8c" strokeWidth="1.500">
        <path d="M4 2C0 6 0 14 4 18M16 2c4 4 4 12 0 16M7 5c-3 3-3 7 0 10M13 5c3 3 3 7 0 10M10 10v13" /><circle cx="10" cy="10" r="1.500" />
      </svg>
      <span className="mx-2 h-5 w-5 rounded-sm bg-[#a0a0a0] text-center leading-5 text-white">3</span>
      <span>已连接</span>
      <div className="mr-6 ml-auto flex items-center gap-[22px]">
        <svg className="h-[22px] w-[23px]" viewBox="0 0 23 22" fill="#a0a0a0"><path d="M0 7h5l9-6v20l-9-6H0z" /><path d="M17 6l5-4M17 11h6M17 15l5 4" stroke="#a0a0a0" strokeWidth="2" /></svg>
        <svg className="h-[22px] w-[22px]" viewBox="0 0 22 22">
          <rect y="3" width="22" height="17" rx="1.500" fill="#78787c" />
          <path d="M3 7.500h16M3 11.500h16" stroke="#212126" strokeWidth="2" strokeDasharray="2 1.500" /><path d="M6 16h10" stroke="#212126" strokeWidth="2" />
        </svg>
        <svg className="h-[22px] w-[23px]" viewBox="0 0 23 22"><path d="M1 1h21v15H1zM5 19h13v2H5zM10 16h3v4h-3z" fill="#78787c" /><path d="M4 9h4l2-4 3 8 2-4h4" fill="none" stroke="#212126" strokeWidth="1.500" /></svg>
        <svg className="h-[22px] w-[22px]" viewBox="0 0 22 22"><path d="M5 2c-4 8 4 17 14 14zM6 14l-4 6h8v-3zM8 2h9v7h-2V5l-4 5z" fill="#78787c" /></svg>
        <svg className="h-[22px] w-[23px]" viewBox="0 0 23 22"><path d="M1 7h6l4-6 5 6h6v14H1z" fill="#78787c" /><path d="M9 7l2-3 3 3zM4 11h7M4 14h15M4 17h12" stroke="#212126" strokeWidth="1.500" fill="#212126" /></svg>
      </div>
    </footer>
  );
}

// widgets that float above the terminal window
function FloatingWidgets() {
  return (
    <>
      <div className="absolute top-[300px] right-6 flex h-[72px] w-[132px] flex-col items-center justify-end rounded-[18px] border border-[#787c84] bg-[#5b6068] pb-1">
        <span className="mb-1 font-['Open_Sans',sans-serif] text-[32px] leading-[44px] font-bold text-[#c4c6ca]">iQIYI</span>
        <span className="h-[3px] w-[84px] bg-[#9a9da2]" />
      </div>
      <div className="absolute top-[410px] right-0 flex h-[213px] w-[51px] flex-col items-center rounded-l-2xl bg-[#14161c]/50 pt-4 font-['Noto_Sans',sans-serif] text-white">
        <span className="h-4 w-4 rounded-full border border-[#2878f0] bg-[#00be64]" />
        <span className="mt-[27px] flex h-[45px] w-[15px] flex-col justify-end overflow-hidden rounded-full bg-white/10">
          <span className="h-6 bg-linear-to-b from-[#e0b414] to-[#32c8aa]" />
        </span>
        <span className="mt-[23px] text-[15px] leading-4">24.8</span>
        <span className="flex items-center gap-1 text-[13px] leading-4 text-[#c8c8c8]">
          <svg className="h-[11px] w-[9px]" viewBox="0 0 9 11"><path d="M4.500 0L9 5H5.500v6h-2V5H0z" fill="#14a0ff" /></svg>K/s
        </span>
        <span className="mt-[7px] text-[15px] leading-4">0.9</span>
        <span className="flex items-center gap-1 text-[13px] leading-4 text-[#c8c8c8]">
          <svg className="h-[11px] w-[9px]" viewBox="0 0 9 11"><path d="M4.500 11L0 6h3.500V0h2v6H9z" fill="#00be64" /></svg>K/s
        </span>
      </div>
      <div className="absolute top-[974px] right-[13px] flex h-[45px] w-[333px] items-center rounded-full bg-[#3a393f] pr-[22px] pl-[17px] text-[21px] text-[#32b46e] shadow-lg">
        <span className="w-[97px] text-[#f0f0f0]">歌力思</span>
        <span>7.95</span>
        <span className="ml-auto">-0.25%</span>
        <Search size={22} strokeWidth={1} className="ml-[18px] text-[#a0a0a0]" />
      </div>
      <svg className="absolute top-[415px] left-0 h-[22px] w-3" viewBox="0 0 12 22"><path d="M0 0l12 11L0 22z" fill="#6e6e6e" /></svg>
    </>
  );
}

export default function App() {
  return (
    <div className="relative flex min-h-screen flex-col overflow-hidden bg-[#0a0a0a] font-['Noto_Sans','Noto_Sans_CJK_SC',sans-serif]">
      <TitleBar />
      <main className="flex flex-1">
        <ChartColumn />
        <ChipColumn />
        <InfoColumn />
      </main>
      <TradeBar />
      <StatusBar />
      <div className="h-1.5 shrink-0 border-t-2 border-[#8c8480] bg-[#eadccb]" />
      <FloatingWidgets />
    </div>
  );
}
